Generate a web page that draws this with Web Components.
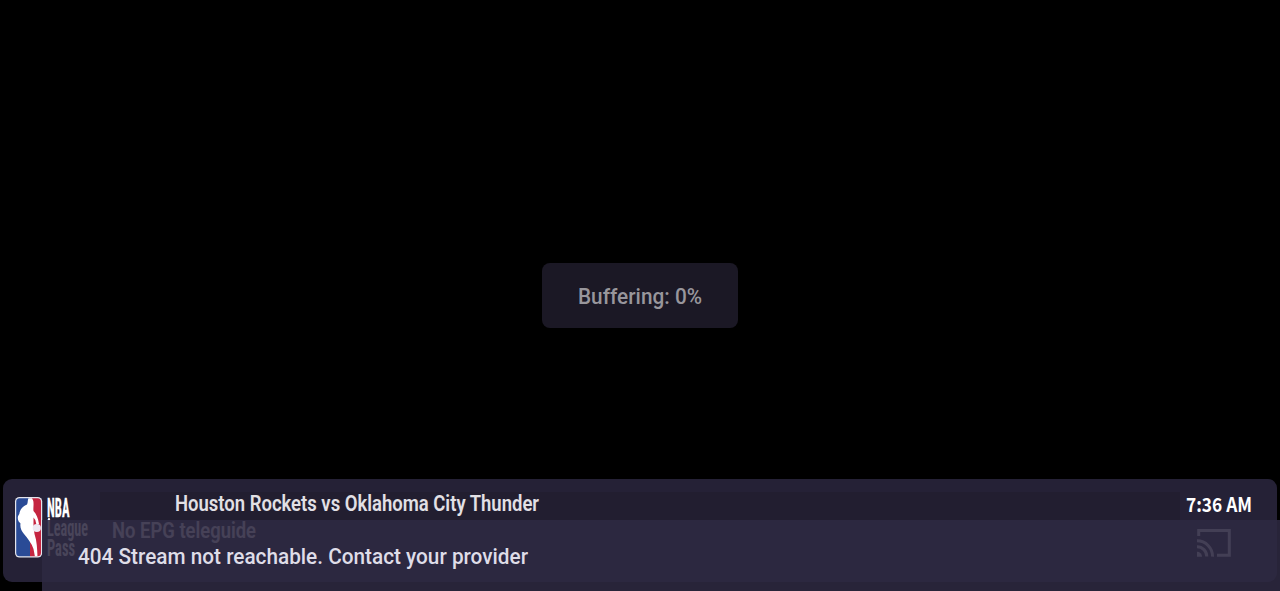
<!DOCTYPE html>
<html lang="en">
<head>
<meta charset="utf-8">
<title>Player</title>
<style>
    body {
        margin: 0;
        background: #000;
        font-family: Roboto, "Liberation Sans", sans-serif;
    }
</style>
</head>
<body>
<player-screen>
    <buffer-badge slot="status" percent="0"></buffer-badge>
    <channel-bar slot="info" time="7:36 AM">
        <league-logo slot="logo"></league-logo>
        <fit-text slot="title" width="364" size="21.3" weight="600">Houston Rockets vs Oklahoma City Thunder</fit-text>
        <fit-text slot="guide" width="144" size="21.5" weight="600">No EPG teleguide</fit-text>
    </channel-bar>
    <error-toast slot="toast">
        <fit-text width="450" size="21.2" weight="500">404 Stream not reachable. Contact your provider</fit-text>
    </error-toast>
</player-screen>

<script>
// One line of text, squeezed or stretched to a given width
class FitText extends HTMLElement {
    constructor() {
        super();
        this.attachShadow({ mode: 'open' });
    }

    connectedCallback() {
        const width = this.getAttribute('width');
        const size = Number(this.getAttribute('size'));
        const weight = this.getAttribute('weight') || '400';
        const text = this.textContent.trim();

        this.shadowRoot.innerHTML = `
            <style>
                :host {
                    display: block;
                    width: ${width}px;
                    height: 24px;
                }

                svg {
                    display: block;
                    overflow: visible;
                }

                text {
                    font-size: ${size}px;
                    font-weight: ${weight};
                    fill: currentColor;
                }
            </style>
            <svg width="${width}" height="24">
                <text x="0" y="19" textLength="${width}" lengthAdjust="spacingAndGlyphs">${text}</text>
            </svg>
        `;
    }
}

class PlayerScreen extends HTMLElement {
    constructor() {
        super();
        this.attachShadow({ mode: 'open' });
        this.shadowRoot.innerHTML = `
            <style>
                :host {
                    display: grid;
                    grid-template: 100vh / 100%;
                    overflow: hidden;
                    background: #000;
                }

                ::slotted(*) {
                    grid-area: 1 / 1;
                }

                ::slotted([slot="status"]) {
                    place-self: center;
                }

                ::slotted([slot="info"]) {
                    align-self: end;
                    margin: 0 3px 9px;
                }

                ::slotted([slot="toast"]) {
                    align-self: end;
                    margin-left: 42px;
                }
            </style>
            <slot name="status"></slot>
            <slot name="info"></slot>
            <slot name="toast"></slot>
        `;
    }
}

class BufferBadge extends HTMLElement {
    constructor() {
        super();
        this.attachShadow({ mode: 'open' });
    }

    connectedCallback() {
        this.shadowRoot.innerHTML = `
            <style>
                :host {
                    display: flex;
                    justify-content: center;
                    align-items: center;
                    box-sizing: border-box;
                    width: 196px;
                    height: 65px;
                    padding-top: 3px;
                    border-radius: 8px;
                    background: #1b1825;
                    color: #98969c;
                }
            </style>
            <fit-text width="124" size="21.2" weight="500">Buffering: ${this.getAttribute('percent')}%</fit-text>
        `;
    }
}

class LeagueLogo extends HTMLElement {
    constructor() {
        super();
        this.attachShadow({ mode: 'open' });
        this.shadowRoot.innerHTML = `
            <style>
                :host {
                    display: block;
                }

                svg {
                    display: block;
                    overflow: visible;
                    font-family: "Roboto Condensed", Roboto, sans-serif;
                    fill: #fff;
                }
            </style>
            <svg width="76" height="64" viewBox="14 495 76 64">
                <defs>
                    <clipPath id="card">
                        <rect x="16.2" y="498.3" width="24.8" height="58" rx="3.5"/>
                    </clipPath>
                </defs>
                <rect x="15" y="497" width="27.2" height="60.6" rx="4.5" fill="#e4e5ed"/>
                <g clip-path="url(#card)">
                    <path d="M16 498h14v59H16z" fill="#2a4b96"/>
                    <path d="M30 498h12v59H30z" fill="#c52540"/>
                    <path d="M28.5 498 C27.5 500 28 502.5 27 504.5 C23 506 20 509 19.3 514 C17.5 516 17.3 519 18.7 521.5 L20.5 523.5 C19.8 528 21.5 530.5 24 534 C28 539 31.5 543 33.5 549 L35 557 H37.5 C37.2 549 37 541 34.5 534 L33.5 527 L33.5 517.5 L35.3 520 L36.5 525 L39 524 C38 518 36.5 514 33.5 511 C33 508 34 505 33.3 501 L32 498 Z"/>
                    <circle cx="36.8" cy="528" r="4.1" fill="#eee8f2"/>
                </g>
                <text x="47" y="517" font-size="25.5" font-weight="700" textLength="22.5" lengthAdjust="spacingAndGlyphs" stroke="#fff" stroke-width="0.3">NBA</text>
                <rect x="48" y="518" width="2" height="2" fill="#d8d6de"/>
                <text x="47" y="536" font-size="24" font-weight="600" textLength="41" lengthAdjust="spacingAndGlyphs">League</text>
                <text x="47" y="555.5" font-size="24.5" font-weight="600" textLength="28" lengthAdjust="spacingAndGlyphs">Pass</text>
            </svg>
        `;
    }
}

class CastIcon extends HTMLElement {
    constructor() {
        super();
        this.attachShadow({ mode: 'open' });
        this.shadowRoot.innerHTML = `
            <style>
                :host {
                    display: block;
                }

                svg {
                    display: block;
                    fill: none;
                    stroke: #d0ced8;
                    stroke-width: 3;
                }
            </style>
            <svg width="34" height="28" viewBox="0 0 34 28">
                <path d="M1.7 7V1.6H32.3V26.2H20"/>
                <path d="M0 11.8A15.5 15.5 0 0 1 15.5 27.6M0 17.7A9.8 9.8 0 0 1 9.8 27.6"/>
                <path d="M0 22.7A5 5 0 0 1 5 27.7H0Z" fill="#d0ced8" stroke="none"/>
            </svg>
        `;
    }
}

class ChannelBar extends HTMLElement {
    constructor() {
        super();
        this.attachShadow({ mode: 'open' });
    }

    connectedCallback() {
        this.shadowRoot.innerHTML = `
            <style>
                :host {
                    display: grid;
                    grid-template-columns: 97px 1fr 97px;
                    height: 103px;
                    border-radius: 9px;
                    background: #252136;
                    color: #e2e0e5;
                    overflow: hidden;
                }

                .logo {
                    padding: 16px 0 0 11px;
                }

                .info {
                    padding-top: 13px;
                }

                .title {
                    height: 27px;
                    padding-left: 75px;
                    background: #221e30;
                    box-shadow: 0 1px #221e30;
                }

                .guide {
                    padding: 0 0 0 12px;
                }

                .side {
                    padding: 14px 0 0 6px;
                    color: #fff;
                    font-family: "Noto Sans CJK SC", "Noto Sans", sans-serif;
                }

                cast-icon {
                    margin: 12px 0 0 11px;
                }
            </style>
            <div class="logo"><slot name="logo"></slot></div>
            <div class="info">
                <div class="title"><slot name="title"></slot></div>
                <div class="guide"><slot name="guide"></slot></div>
            </div>
            <div class="side">
                <fit-text width="66" size="19.5" weight="700">${this.getAttribute('time')}</fit-text>
                <cast-icon></cast-icon>
            </div>
        `;
    }
}

// Translucent, so the channel bar stays faintly visible below it
class ErrorToast extends HTMLElement {
    constructor() {
        super();
        this.attachShadow({ mode: 'open' });
        this.shadowRoot.innerHTML = `
            <style>
                :host {
                    display: flex;
                    align-items: center;
                    box-sizing: border-box;
                    height: 71px;
                    padding: 3px 0 0 36px;
                    background: rgba(46, 41, 66, 0.87);
                    color: #dfdde8;
                }
            </style>
            <slot></slot>
        `;
    }
}

customElements.define('fit-text', FitText);
customElements.define('player-screen', PlayerScreen);
customElements.define('buffer-badge', BufferBadge);
customElements.define('league-logo', LeagueLogo);
customElements.define('cast-icon', CastIcon);
customElements.define('channel-bar', ChannelBar);
customElements.define('error-toast', ErrorToast);
</script>
</body>
</html>
